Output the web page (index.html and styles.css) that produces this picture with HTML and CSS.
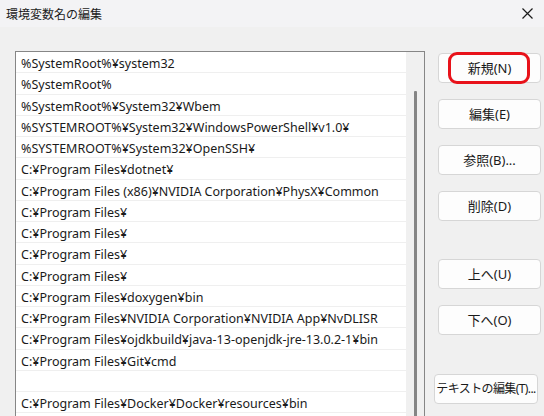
FILE: index.html
```html
<!DOCTYPE html>
<html lang="ja">
<head>
    <meta charset="UTF-8">
    <meta name="viewport" content="width=device-width, initial-scale=1.0">
    <title>環境変数名の編集</title>
    <link rel="stylesheet" href="styles.css">
</head>
<body>

    <div class="dialog">
        <!-- Title bar -->
        <div class="titlebar">
            <span class="title">環境変数名の編集</span>
            <span class="close">
                <svg width="11" height="11" viewBox="0 0 11 11">
                    <path d="M0.5 0.5 L10.5 10.5 M10.5 0.5 L0.5 10.5" stroke="#1b1b1b" stroke-width="1.2" fill="none"/>
                </svg>
            </span>
        </div>

        <div class="content">
            <!-- Path entries -->
            <div class="path-list">
                <ul class="rows">
                    <li>%SystemRoot%¥system32</li>
                    <li>%SystemRoot%</li>
                    <li>%SystemRoot%¥System32¥Wbem</li>
                    <li>%SYSTEMROOT%¥System32¥WindowsPowerShell¥v1.0¥</li>
                    <li>%SYSTEMROOT%¥System32¥OpenSSH¥</li>
                    <li>C:¥Program Files¥dotnet¥</li>
                    <li>C:¥Program Files (x86)¥NVIDIA Corporation¥PhysX¥Common</li>
                    <li>C:¥Program Files¥</li>
                    <li>C:¥Program Files¥</li>
                    <li>C:¥Program Files¥</li>
                    <li>C:¥Program Files¥</li>
                    <li>C:¥Program Files¥doxygen¥bin</li>
                    <li>C:¥Program Files¥NVIDIA Corporation¥NVIDIA App¥NvDLISR</li>
                    <li>C:¥Program Files¥ojdkbuild¥java-13-openjdk-jre-13.0.2-1¥bin</li>
                    <li>C:¥Program Files¥Git¥cmd</li>
                    <li></li>
                    <li>C:¥Program Files¥Docker¥Docker¥resources¥bin</li>
                    <li></li>
                </ul>
                <div class="scrollbar"><div class="thumb"></div></div>
            </div>

            <!-- Buttons -->
            <div class="actions">
                <button class="btn btn-marked">新規(N)</button>
                <button class="btn">編集(E)</button>
                <button class="btn">参照(B)...</button>
                <button class="btn">削除(D)</button>
                <button class="btn btn-split">上へ(U)</button>
                <button class="btn">下へ(O)</button>
                <button class="btn btn-split btn-wide">テキストの編集(T)...</button>
            </div>
        </div>
    </div>

</body>
</html>
```

FILE: styles.css
```css
html, body {
    margin: 0;
    height: 100%;
    overflow: hidden;
}

body {
    font-family: "Noto Sans", "Noto Sans CJK JP", sans-serif;
    font-size: 12.5px;
    color: #1a1a1a;
    background: #f0f0f0;
}

.dialog {
    height: 100%;
}

.titlebar {
    height: 27px;
    display: flex;
    align-items: center;
    justify-content: space-between;
    background: #f3f3f5;
    padding: 0 10px 0 6px;
}

.title {
    font-family: "Noto Sans CJK JP", sans-serif;
    font-size: 12px;
    color: #1b1b1b;
}

.close {
    display: flex;
    margin-right: 1px;
}

.content {
    display: flex;
    align-items: flex-start;
    padding: 24px 0 0 15px;
}

.path-list {
    width: 408px;
    height: 390px;
    border: 1px solid #868686;
    background: #fff;
    display: flex;
    overflow: hidden;
}

.rows {
    list-style: none;
    margin: 0;
    padding: 0;
    flex: 1;
}

.rows li {
    height: 18.25px;
    line-height: 19px;
    padding: 2px 0 0 5px;
    border-bottom: 1px solid #efefef;
    white-space: nowrap;
    overflow: hidden;
}

.scrollbar {
    width: 18px;
    background: #f0f0f0;
    display: flex;
    justify-content: center;
    padding-top: 39px;
}

.thumb {
    width: 3px;
    height: 400px;
    background: #858585;
    border-radius: 1px;
    margin-left: 1px;
}

.actions {
    display: flex;
    flex-direction: column;
    gap: 16px;
    margin-left: 13px;
    padding-top: 2px;
}

.btn {
    position: relative;
    width: 103px;
    height: 30px;
    font-family: "Noto Sans", "Noto Sans CJK JP", sans-serif;
    font-size: 13px;
    color: #1a1a1a;
    background: #fdfdfd;
    border: 1px solid #d6d6d6;
    border-radius: 4px;
    padding: 0 0 2px;
    white-space: nowrap;
}

.btn-split {
    margin-top: 22px;
}

.btn-wide {
    width: 104px;
    margin-left: -4px;
    margin-top: 23px;
    font-size: 12px;
    letter-spacing: -0.6px;
}

/* red outline drawn round the first button */
.btn-marked::after {
    content: "";
    position: absolute;
    top: -2px;
    bottom: -2px;
    left: 9px;
    right: 10px;
    border: 3px solid #e8121a;
    border-radius: 9px;
}
```
